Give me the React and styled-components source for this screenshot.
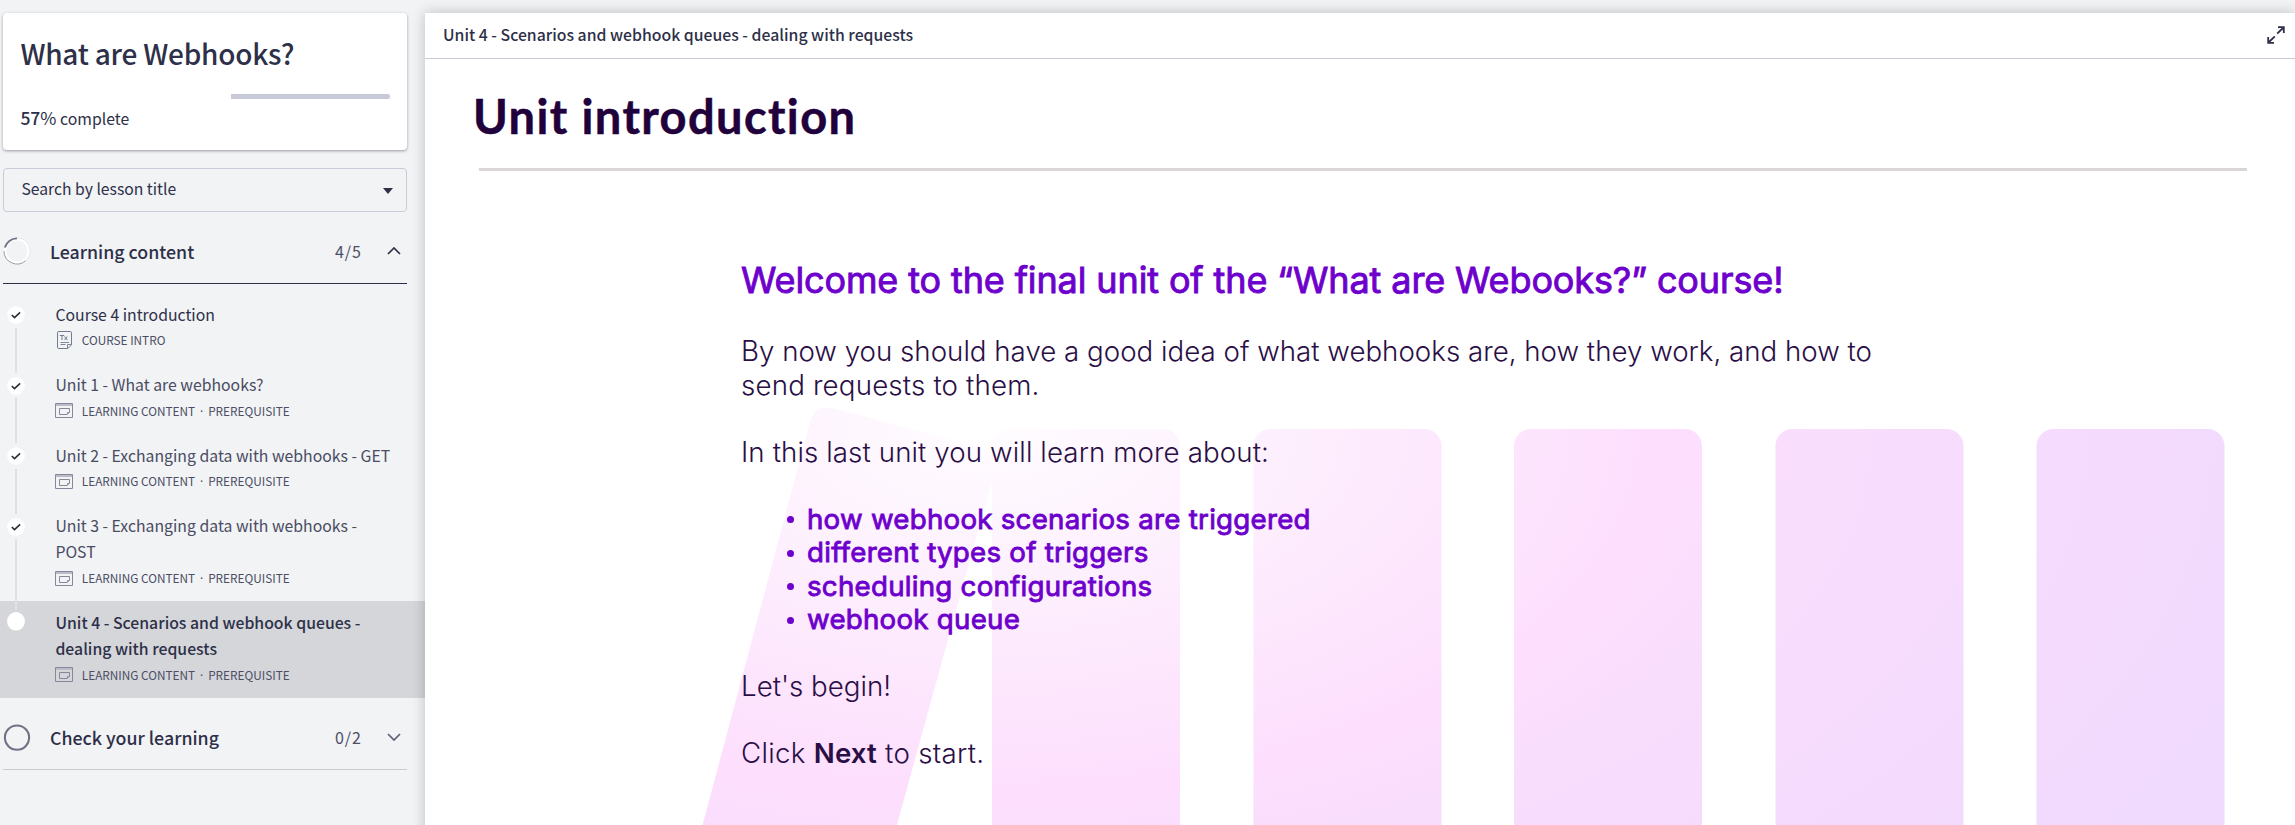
import React from "react";
import styled, { createGlobalStyle, css } from "styled-components";

const ink = "#2d3048";
const uiFont = '"Noto Sans CJK SC", "Noto Sans", sans-serif';
const slideFont = 'Inter, "Liberation Sans", sans-serif';

const GlobalStyle = createGlobalStyle`
  *, *::before, *::after { box-sizing: border-box; }
  body { margin: 0; background: #f1f3f5; color: ${ink}; font-family: ${uiFont}; }
  h1, h2, p, ul { margin: 0; padding: 0; font-weight: inherit; }
  svg { display: block; flex: none; }
`;

const Page = styled.div`
  display: flex;
  height: 825px;
  padding-top: 13px;
  overflow: hidden;
`;

const Sidebar = styled.aside`
  flex: none;
  width: 425px;
`;

const ProgressCard = styled.section`
  width: 404px;
  height: 137px;
  margin-left: 3px;
  padding: 22px 17px 0 17.4px;
  border-radius: 4px;
  background: #fff;
  box-shadow: 0 1px 3px rgba(40, 42, 60, 0.45);
`;

const CourseTitle = styled.h1`
  font-size: 28px;
  font-weight: 500;
  line-height: 36px;
  letter-spacing: -0.22px;
`;

const ProgressTrack = styled.div`
  display: flex;
  justify-content: flex-end;
  height: 5px;
  margin-top: 23px;
`;

const ProgressRest = styled.div`
  width: 159px;
  border-radius: 0 2px 2px 0;
  background: #c9cad8;
`;

const ProgressText = styled.p`
  margin-top: 7px;
  font-size: 15.8px;
  line-height: 24px;
  b { font-size: 17.5px; font-weight: 500; }
  span { font-size: 17.5px; }
`;

const LessonSelect = styled.div`
  display: flex;
  align-items: center;
  justify-content: space-between;
  width: 404px;
  height: 44px;
  margin: 18px 0 0 3px;
  padding: 0 13px 3px 17.5px;
  border: 1px solid #c9cad8;
  border-radius: 4px;
  font-size: 15.7px;
  line-height: 26px;
`;

const Caret = styled.span`
  margin-top: 4px;
  border: 5px solid transparent;
  border-top: 6px solid ${ink};
  border-bottom: 0;
`;

const SectionHeader = styled.div`
  display: flex;
  align-items: center;
  width: 404px;
  height: 72px;
  margin-left: 3px;
  padding: 26px 6px 19px 0;
  border-bottom: 1px solid ${(p) => (p.$open ? ink : "#c9cbd0")};
`;

const SectionTitle = styled.h2`
  flex: 1;
  margin-left: 19px;
  font-size: 17.8px;
  font-weight: 500;
  line-height: 26px;
`;

const SectionCount = styled.span`
  margin-right: 25px;
  color: #4c4e66;
  font-size: 16px;
  font-weight: 400;
  line-height: 26px;
  letter-spacing: 1px;
`;

const LessonList = styled.div`
  padding-top: 9px;
`;

const Lesson = styled.div`
  display: flex;
  padding: 8.6px 0 12.7px 7px;
  ${(p) => p.$active && css`background: #d5d6da;`}
`;

const Rail = styled.div`
  position: relative;
  z-index: 1;
  display: flex;
  flex-direction: column;
  align-items: center;
  width: 18px;
  margin: ${(p) => (p.$active ? 2.6 : 4.6)}px 30.4px -22px 0;
`;

const RailLine = styled.div`
  flex: 1;
  width: 2px;
  margin-top: 3.5px;
  background: #dfe1e4;
`;

const LessonBody = styled.div`
  flex: none;
  width: 340px;
`;

const LessonTitle = styled.p`
  font-size: 15.8px;
  line-height: 26.2px;
  font-weight: ${(p) => (p.$active ? 500 : 400)};
  color: ${(p) => (p.$fresh ? ink : "#4a4c62")};
  white-space: pre-line;
`;

const Meta = styled.div`
  display: flex;
  align-items: center;
  height: 20px;
  margin-top: 2.6px;
  margin-bottom: 0.4px;
  color: #4c4e64;
  font-size: 11.8px;
  line-height: 20px;
`;

const MetaSeparator = styled.span`
  width: 13px;
  font-family: "Noto Sans", sans-serif;
  text-align: center;
`;

const MetaIcon = styled.span`
  display: flex;
  justify-content: center;
  width: 18px;
  margin-right: 8.4px;
`;

const Main = styled.main`
  position: relative;
  z-index: 2;
  flex: 1;
  height: 830px;
  background: #fff;
  box-shadow: 0 0 13px rgba(0, 0, 0, 0.22);
`;

const MainHeader = styled.header`
  display: flex;
  align-items: center;
  justify-content: space-between;
  height: 46px;
  padding: 0 10px 2px 18px;
  border-bottom: 1px solid #c9cad8;
  font-size: 15.8px;
  font-weight: 500;
`;

const Slide = styled.div`
  position: relative;
  height: 780px;
`;

const Artwork = styled.svg`
  position: absolute;
  inset: 0;
`;

const SlideContent = styled.div`
  position: relative;
  padding: 28px 48px 0 48px;
`;

const SlideTitle = styled.h1`
  color: #21013b;
  font-family: Lato, "Liberation Sans", sans-serif;
  font-size: 47px;
  font-weight: 700;
  line-height: 58px;
  letter-spacing: 1.4px;
  font-variant-ligatures: none;
  -webkit-text-stroke: 0.5px #21013b;
`;

const Rule = styled.div`
  height: 3px;
  margin: 23px 0 0 6px;
  background: #d9d5d9;
`;

const Copy = styled.div`
  margin: 87px 0 0 268px;
  color: #2a0f46;
  font-family: ${slideFont};
  font-size: 27.7px;
  font-weight: 300;
  line-height: 33.5px;
  b { font-weight: 600; letter-spacing: 0.1px; }
`;

const Welcome = styled.h2`
  margin-bottom: 33.3px;
  color: #6d00cc;
  font-size: 36px;
  font-weight: 400;
  line-height: 44px;
  letter-spacing: -0.12px;
  -webkit-text-stroke: 0.9px #6d00cc;
`;

const Paragraph = styled.p`
  width: 1160px;
  margin-bottom: 33.5px;
  letter-spacing: ${(p) => p.$tracking || 0}px;
`;

const Tracked = styled.span`
  letter-spacing: 0.17px;
`;

const Topics = styled.ul`
  margin: 0 0 33.5px 46px;
  color: #6d00cc;
  font-weight: 400;
  letter-spacing: 0.25px;
  list-style: none;
  -webkit-text-stroke: 0.85px #6d00cc;
`;

const Topic = styled.li`
  display: flex;
  align-items: center;
  gap: 13px;
  &::before {
    content: "";
    width: 7px;
    height: 7px;
    border-radius: 50%;
    background: #6d00cc;
  }
`;

const CheckDot = () => (
  <svg width="18" height="18" viewBox="0 0 18 18">
    <circle cx="9" cy="9" r="8.8" fill="#fff" />
    <path d="M4.8 9l2.700 2.600 5.600-5.200" fill="none" stroke="#2b2c36" strokeWidth="1.6" />
  </svg>
);

const CurrentDot = () => (
  <svg width="18" height="19" viewBox="0 0 18 19">
    <ellipse cx="9" cy="9.3" rx="8.9" ry="9.3" fill="#fff" />
  </svg>
);

const WindowIcon = () => (
  <svg width="18" height="15" viewBox="0 0 18 15" fill="none" stroke="#85889b">
    <path d="M.5.5h17v14H.5z" />
    <path d="M1 2h16" stroke="#b9bbc8" strokeWidth="2" />
    <path d="M4.500 5.500h10v3.500l-2.500 2.500H4.500zM14.500 9.500h-2v2" />
  </svg>
);

const TextDocIcon = () => (
  <svg width="15" height="18" viewBox="0 0 15 18" fill="none" stroke="#737b92">
    <path d="M1.8.5h11.4q1.3 0 1.3 1.3v12l-3.6 3.7H1.8Q.5 17.5.5 16.2V1.8Q.5.5 1.8.5z" />
    <path d="M14.300 13.500h-3.800v3.800M3.500 11.500h8.500M3.500 13.500h5" strokeWidth=".9" />
    <path d="M2.800 4.500h4.400M5 4.500v4.500M7.500 5.500l2.800 3.500M10.300 5.500l-2.800 3.500" />
  </svg>
);

const PartialRing = () => (
  <svg width="28" height="28" viewBox="0 0 28 28" fill="none">
    <circle cx="14" cy="14" r="11.8" stroke="#fff" strokeWidth="2.4" />
    <path d="M1 14a13 13 0 0 0 21.5 9.8" stroke="#9091a0" strokeWidth=".9" />
    <path d="M22.5 23.8A13 13 0 0 0 14 1" stroke="#dcdde2" strokeWidth=".6" />
    <path d="M1.8 10.5A12.6 12.6 0 0 1 14 1.4" stroke="#6f7185" strokeWidth="1.9" />
  </svg>
);

const EmptyRing = () => (
  <svg width="28" height="28" viewBox="0 0 28 28" fill="none">
    <circle cx="14" cy="14.6" r="12.1" stroke="#6f7185" strokeWidth="2.1" />
  </svg>
);

const Chevron = ({ up }) => (
  <svg width="14" height="8" viewBox="0 0 14 8" fill="none">
    <path d={up ? "M1 7l6-6 6 6" : "M1 1l6 6 6-6"} stroke={up ? ink : "#5d6075"} strokeWidth="1.7" />
  </svg>
);

const ExpandIcon = () => (
  <svg width="18" height="18" viewBox="0 0 18 18" fill="none" stroke={ink} strokeWidth="1.8">
    <path d="M11 1.200h5.800v5.800M16.500 1.500l-6.300 6.100M7 16.800H1.200V11M1.500 16.500l6.300-6.100" />
  </svg>
);

const lessons = [
  { title: "Course 4 introduction", meta: "COURSE INTRO", doc: true },
  { title: "Unit 1 - What are webhooks?", meta: "LEARNING CONTENT", required: true },
  { title: "Unit 2 - Exchanging data with webhooks - GET", meta: "LEARNING CONTENT", required: true },
  { title: "Unit 3 - Exchanging data with webhooks -\nPOST", meta: "LEARNING CONTENT", required: true },
  { title: "Unit 4 - Scenarios and webhook queues -\ndealing with requests", meta: "LEARNING CONTENT", required: true, active: true },
];

const columns = [567, 828.5, 1089, 1350.5, 1611.5];

export default function App() {
  return (
    <>
      <GlobalStyle />
      <Page>
        <Sidebar>
          <ProgressCard>
            <CourseTitle>What are Webhooks?</CourseTitle>
            <ProgressTrack>
              <ProgressRest />
            </ProgressTrack>
            <ProgressText>
              <b>57</b><span>%</span> complete
            </ProgressText>
          </ProgressCard>
          <LessonSelect>
            Search by lesson title
            <Caret />
          </LessonSelect>
          <SectionHeader $open>
            <PartialRing />
            <SectionTitle>Learning content</SectionTitle>
            <SectionCount>4/5</SectionCount>
            <Chevron up />
          </SectionHeader>
          <LessonList>
            {lessons.map((l) => (
              <Lesson key={l.title} $active={l.active}>
                <Rail $active={l.active}>
                  {l.active ? <CurrentDot /> : <CheckDot />}
                  {!l.active && <RailLine />}
                </Rail>
                <LessonBody>
                  <LessonTitle $active={l.active} $fresh={l.doc || l.active}>{l.title}</LessonTitle>
                  <Meta>
                    <MetaIcon>{l.doc ? <TextDocIcon /> : <WindowIcon />}</MetaIcon>
                    <span>{l.meta}</span>
                    {l.required && (
                      <>
                        <MetaSeparator>·</MetaSeparator>
                        <span>PREREQUISITE</span>
                      </>
                    )}
                  </Meta>
                </LessonBody>
              </Lesson>
            ))}
          </LessonList>
          <SectionHeader>
            <EmptyRing />
            <SectionTitle>Check your learning</SectionTitle>
            <SectionCount>0/2</SectionCount>
            <Chevron />
          </SectionHeader>
        </Sidebar>
        <Main>
          <MainHeader>
            Unit 4 - Scenarios and webhook queues - dealing with requests
            <ExpandIcon />
          </MainHeader>
          <Slide>
            <Artwork width="1870" height="780" viewBox="0 0 1870 780">
              <defs>
                <radialGradient
                  id="glow"
                  gradientUnits="userSpaceOnUse"
                  cx="0"
                  cy="0"
                  r="2"
                  gradientTransform="translate(560 371) scale(687 370)"
                >
                  <stop offset="0" stopColor="#fffdff" />
                  <stop offset="0.25" stopColor="#fdedfd" />
                  <stop offset="0.5" stopColor="#fddefd" />
                  <stop offset="0.6" stopColor="#f9ddfd" />
                  <stop offset="0.78" stopColor="#f5dbfd" />
                  <stop offset="1" stopColor="#f0dafe" />
                </radialGradient>
              </defs>
              <g fill="url(#glow)">
                <path d="M385 363.3Q390 345 409 349.5L555 388Q574 394 569.5 412L446 860H252.5z" />
                {columns.map((x) => (
                  <rect key={x} x={x} y="370" width="188" height="440" rx="17" />
                ))}
              </g>
            </Artwork>
            <SlideContent>
              <SlideTitle>Unit introduction</SlideTitle>
              <Rule />
              <Copy>
                <Welcome>Welcome to the final unit of the “What are Webooks?” course!</Welcome>
                <Paragraph>
                  By now you should have a good idea of what webhooks are, how they work, and how to{" "}
                  <Tracked>send requests to them.</Tracked>
                </Paragraph>
                <Paragraph $tracking={0.1}>In this last unit you will learn more about:</Paragraph>
                <Topics>
                  <Topic>how webhook scenarios are triggered</Topic>
                  <Topic>different types of triggers</Topic>
                  <Topic>scheduling configurations</Topic>
                  <Topic>webhook queue</Topic>
                </Topics>
                <Paragraph>Let's begin!</Paragraph>
                <Paragraph $tracking={0.3}>
                  Click <b>Next</b> to start.
                </Paragraph>
              </Copy>
            </SlideContent>
          </Slide>
        </Main>
      </Page>
    </>
  );
}
